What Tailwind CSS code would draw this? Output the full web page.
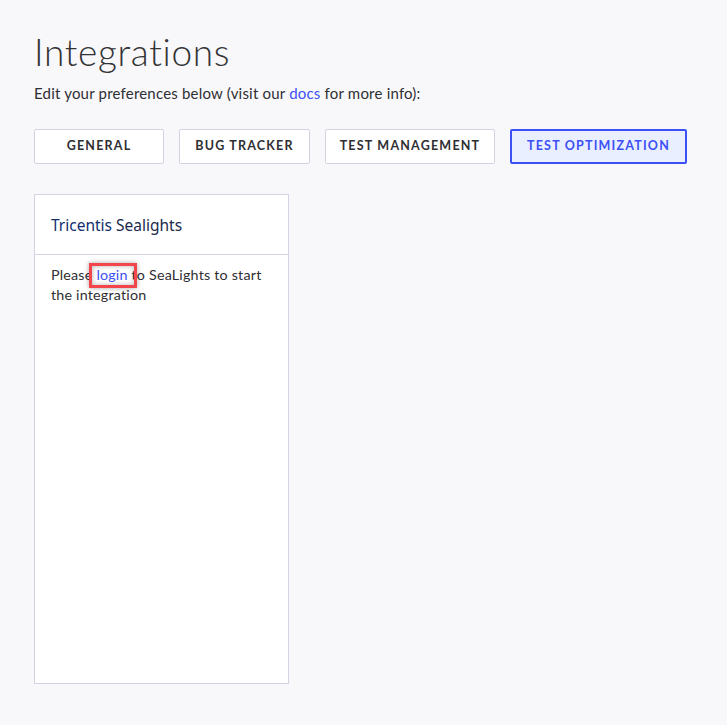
<!DOCTYPE html>
<html lang="en">
<head>
    <meta charset="UTF-8">
    <title>Integrations</title>
    <script src="https://cdn.jsdelivr.net/npm/@tailwindcss/browser@4"></script>
</head>
<body class="bg-[#f8f8fa] font-['Lato',sans-serif] text-[#2f2f33] h-[725px] overflow-hidden">
    <div class="pl-[34px] pt-[29px]">
        <h1 class="text-[37px] leading-[45px] font-light tracking-[0.65px] text-[#333336]">Integrations</h1>
        <p class="mt-[9px] text-[15px] leading-[20px] tracking-[0.2px]">Edit your preferences below (visit our <a href="#" class="text-[#3d50f5]">docs</a> for more info):</p>

        <div class="flex gap-[15px] mt-[26px]">
            <button class="w-[130px] h-[35px] bg-white border border-[#d3d3e3] rounded-[2px] text-[12.5px] font-bold tracking-[1.2px]">GENERAL</button>
            <button class="w-[131px] h-[35px] bg-white border border-[#d3d3e3] rounded-[2px] text-[12.5px] font-bold tracking-[1.2px]">BUG TRACKER</button>
            <button class="w-[170px] h-[35px] bg-white border border-[#d3d3e3] rounded-[2px] text-[12.5px] font-bold tracking-[1.2px]">TEST MANAGEMENT</button>
            <button class="w-[177px] h-[35px] bg-[#e9effe] border-2 border-[#3d50f5] rounded-[2px] text-[12.5px] font-bold tracking-[1.2px] text-[#3d50f5]">TEST OPTIMIZATION</button>
        </div>

        <div class="w-[255px] h-[490px] mt-[30px] bg-white border border-[#d3d3e3]">
            <div class="h-[60px] px-[16px] pt-[2px] flex items-center border-b border-[#d3d3e3]">
                <h2 class="font-['Noto_Sans',sans-serif] text-[15.5px] text-[#1a2a4c]"><span class="text-[#12306e]">Tricentis</span> Sealights</h2>
            </div>
            <p class="px-[16px] pt-[10px] text-[14.3px] leading-[20px] tracking-[0.2px]">
                Please <span class="relative"><a href="#" class="text-[#3d50f5]">login</a><span class="absolute left-[-7px] top-[-3px] w-[48px] h-[25px] border-[3px] border-[#f4444c] shadow-[0_0_5px_rgba(0,0,0,0.35),inset_0_0_5px_rgba(0,0,0,0.3)]"></span></span> to SeaLights to start the integration
            </p>
        </div>
    </div>
</body>
</html>
